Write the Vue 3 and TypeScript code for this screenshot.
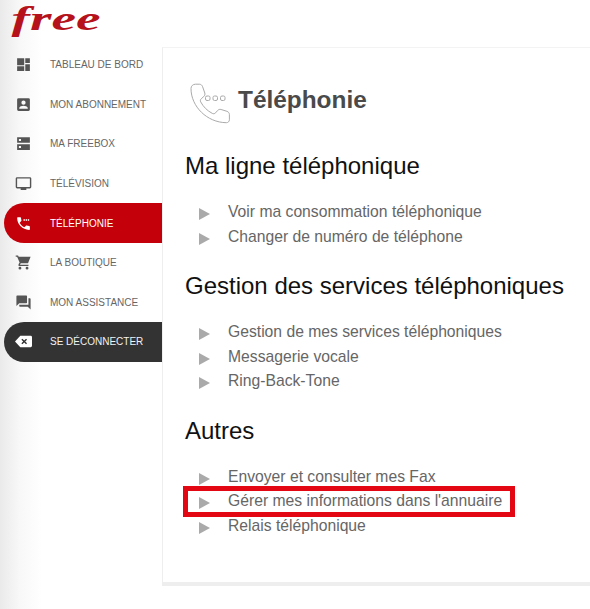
<template>
  <div class="page">
    <aside class="sidebar">
      <svg class="logo" viewBox="0 0 162 45" role="img" aria-label="free">
        <text x="7" y="30" transform="scale(1.65 1)" class="logo-text">free</text>
      </svg>
      <nav class="menu">
        <a
          v-for="item in menu"
          :key="item.label"
          class="menu-item"
          :class="item.kind"
        >
          <svg class="menu-icon" viewBox="0 0 24 24" :fill="item.kind ? '#fff' : '#555'">
            <path :d="item.icon" fill-rule="evenodd" />
          </svg>
          <span>{{ item.label }}</span>
        </a>
      </nav>
    </aside>

    <main class="panel">
      <header class="title">
        <svg class="title-icon" viewBox="0 0 42 42" fill="none" stroke="#aaa" stroke-width="1">
          <path d="M2 5.500C2 3 4 1.200 6.500 1.200h3.800c1.600 0 2.800 1 3.300 2.500l2.200 6.300c.4 1.300 0 2.600-1 3.500l-2.500 2.200c-1 .9-1.200 2-.6 3.200 2.700 5 6.500 8.800 11.600 11.500 1.200.6 2.400.4 3.300-.6l2-2.300c.9-1 2.200-1.400 3.500-1l5.800 1.800c1.500.5 2.500 1.700 2.500 3.300v5.200c0 1.600-1.300 2.900-3 2.900C18 39.500 2 23.500 2 5.500z" />
          <rect x="16.500" y="13" width="4.500" height="4.500" rx="1.500" />
          <rect x="24" y="13" width="4.500" height="4.500" rx="1.500" />
          <rect x="31.500" y="13" width="4.500" height="4.500" rx="1.500" />
        </svg>
        <h1>Téléphonie</h1>
      </header>

      <section v-for="section in sections" :key="section.title" class="section">
        <h2>{{ section.title }}</h2>
        <ul>
          <li v-for="link in section.links" :key="link" class="link">
            <span class="arrow"></span>
            <span>{{ link }}</span>
            <span v-if="link === highlighted" class="highlight"></span>
          </li>
        </ul>
      </section>
      <div class="panel-end"></div>
    </main>
  </div>
</template>

<script setup lang="ts">
interface MenuItem {
  label: string;
  icon: string;
  kind?: string;
}

const menu: MenuItem[] = [
  { label: 'TABLEAU DE BORD', icon: 'M3 3h10v10H3zM14.500 3H21v7h-6.500zM14.500 11.500H21V21h-6.500zM3 14.500h10V21H3z' },
  {
    label: 'MON ABONNEMENT',
    icon: 'M5 3h14a2 2 0 0 1 2 2v14a2 2 0 0 1-2 2H5a2 2 0 0 1-2-2V5a2 2 0 0 1 2-2zM12 6.500a3 3 0 1 0 0 6 3 3 0 0 0 0-6zM6 18h12v-1c0-2-4-3.100-6-3.100S6 15 6 17z',
  },
  {
    label: 'MA FREEBOX',
    icon: 'M3 3h18v8H3zM3 13h18v8H3zM5.500 5.500v3h3v-3zM5.500 15.500v3h3v-3z',
  },
  {
    label: 'TÉLÉVISION',
    icon: 'M3 3h18a2 2 0 0 1 2 2v12a2 2 0 0 1-2 2h-5v2H8v-2H3a2 2 0 0 1-2-2V5a2 2 0 0 1 2-2zM3 5v12h18V5z',
  },
  {
    label: 'TÉLÉPHONIE',
    kind: 'active',
    icon: 'M20 15.500c-1.250 0-2.450-.2-3.570-.57-.35-.11-.74-.03-1.020.24l-2.200 2.200c-2.830-1.440-5.140-3.740-6.580-6.570l2.200-2.210c.28-.27.36-.66.25-1.010C8.700 6.450 8.500 5.250 8.500 4c0-.55-.45-1-1-1H4c-.55 0-1 .45-1 1 0 9.390 7.610 17 17 17 .55 0 1-.45 1-1v-3.500c0-.55-.45-1-1-1zM12 6h2v2h-2zM15 6h2v2h-2zM18 6h2v2h-2z',
  },
  {
    label: 'LA BOUTIQUE',
    icon: 'M1 2h3.300l.9 2H22l-3.600 9H8.100l-.9 1.700V15H19v2H5v-2.500L6.500 12 3 4H1zM7 18a2 2 0 1 1 0 4 2 2 0 0 1 0-4zM17 18a2 2 0 1 1 0 4 2 2 0 0 1 0-4z',
  },
  {
    label: 'MON ASSISTANCE',
    icon: 'M3 2h13a1 1 0 0 1 1 1v9a1 1 0 0 1-1 1H6l-4 4V3a1 1 0 0 1 1-1zM19 6h2a1 1 0 0 1 1 1v15l-4-4H7a1 1 0 0 1-1-1v-2h13z',
  },
  {
    label: 'SE DÉCONNECTER',
    kind: 'logout',
    icon: 'M7.500 4H22a2 2 0 0 1 2 2v12a2 2 0 0 1-2 2H7.500L0 12zM10.400 8 9 9.400l2.600 2.600L9 14.600l1.400 1.400 2.600-2.600 2.600 2.600 1.400-1.400-2.600-2.600L17 9.400 15.600 8 13 10.600z',
  },
];

const sections = [
  {
    title: 'Ma ligne téléphonique',
    links: ['Voir ma consommation téléphonique', 'Changer de numéro de téléphone'],
  },
  {
    title: 'Gestion des services téléphoniques',
    links: ['Gestion de mes services téléphoniques', 'Messagerie vocale', 'Ring-Back-Tone'],
  },
  {
    title: 'Autres',
    links: [
      'Envoyer et consulter mes Fax',
      "Gérer mes informations dans l'annuaire",
      'Relais téléphonique',
    ],
  },
];

const highlighted = "Gérer mes informations dans l'annuaire";
</script>

<style>
html,
body {
  margin: 0;
  background: #fff;
}
</style>

<style scoped>
.page {
  display: flex;
  width: 590px;
  height: 609px;
  overflow: hidden;
  font-family: "Liberation Sans", Arial, sans-serif;
  background: linear-gradient(90deg, #eaeaea 0, #f8f8f8 20px, #fff 42px);
}

.sidebar {
  flex: 0 0 162px;
}

.logo {
  display: block;
  width: 162px;
  height: 45px;
}

.logo-text {
  font-family: "Liberation Serif", serif;
  font-size: 33.500px;
  font-style: italic;
  font-weight: 700;
  fill: #b5121b;
}

.menu {
  display: flex;
  flex-direction: column;
}

.menu-item {
  display: flex;
  align-items: center;
  height: 39.6px;
  margin-left: 4px;
  padding-left: 11px;
  font-size: 10px;
  color: #666;
  border-radius: 20px 0 0 20px;
}

.menu-item.active {
  color: #fff;
  background: #c4000a;
}

.menu-item.logout {
  color: #f2f2f2;
  background: #333;
}

.menu-icon {
  flex: 0 0 17px;
  width: 17px;
  height: 17px;
  margin-right: 18px;
}

.panel {
  position: relative;
  flex: 1;
  height: 539px;
  margin-top: 47px;
  padding: 35px 0 0 22px;
  background: #fff;
  border-left: 1px solid #eee;
  border-top: 1px solid #f3f3f3;
  box-sizing: border-box;
}

.title {
  display: flex;
  align-items: center;
  gap: 7px;
  margin-left: 4px;
}

.title-icon {
  width: 42px;
  height: 42px;
}

h1 {
  margin: 0 0 9px;
  font-size: 24.400px;
  font-weight: 700;
  color: #4a4a4a;
}

.section {
  margin-top: 22px;
}

.title + .section {
  margin-top: 26px;
}

h2 {
  margin: 0 0 19px;
  font-size: 24px;
  font-weight: 400;
  line-height: 30px;
  color: #111;
}

ul {
  margin: 0;
  padding: 0 0 0 14px;
  list-style: none;
}

.link {
  position: relative;
  display: flex;
  align-items: center;
  height: 24.500px;
  font-size: 15.700px;
  color: #666;
}

.arrow {
  flex: 0 0 11px;
  width: 0;
  height: 0;
  margin-right: 18px;
  box-sizing: border-box;
  border-left: 11px solid #aaa;
  border-top: 6px solid transparent;
  border-bottom: 6px solid transparent;
  transform: translateY(2px);
}

.highlight {
  position: absolute;
  top: -3px;
  left: -16px;
  width: 332px;
  height: 31px;
  box-sizing: border-box;
  border: 5px solid #e30613;
}

.panel-end {
  position: absolute;
  left: 0;
  right: 0;
  bottom: 0;
  height: 4px;
  background: #eee;
}
</style>
